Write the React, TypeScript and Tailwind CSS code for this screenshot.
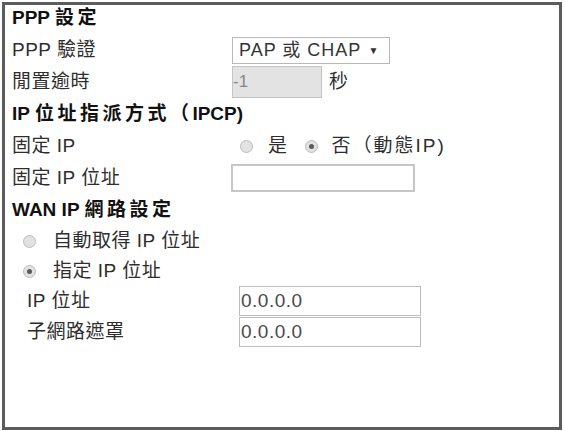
const font = { fontFamily: '"Liberation Sans", "Noto Sans CJK TC", sans-serif' };

function Radio({ checked }: { checked?: boolean }) {
  return (
    <span className="inline-flex h-[13px] w-[13px] shrink-0 items-center justify-center rounded-full border border-[#bcbcbc] bg-[#e2e2e2]">
      {checked && <span className="h-[5px] w-[5px] rounded-full bg-[#5a5a5a]" />}
    </span>
  );
}

function Row({
  label,
  indent,
  h = "h-[32px]",
  children,
}: {
  label: string;
  indent?: boolean;
  h?: string;
  children?: React.ReactNode;
}) {
  return (
    <div className={`flex items-center ${h}`}>
      <div className={indent ? "w-[227px] shrink-0 pl-[15px]" : "w-[220px] shrink-0"}>{label}</div>
      {children}
    </div>
  );
}

function Heading({ latin, cjk, tail }: { latin: string; cjk: string; tail?: string }) {
  return (
    <div className="flex h-[32px] items-center font-bold tracking-normal text-[#111]">
      <span className="whitespace-pre">{latin}</span>
      <span className="tracking-[3.5px]">{cjk}</span>
      {tail && <span>{tail}</span>}
    </div>
  );
}

export default function App() {
  return (
    <div className="h-[431px] w-[565px] bg-white pl-[2px] pt-[2px]">
      <div
        style={font}
        className="h-[428px] w-[560px] border-[3px] border-[#5c5c5c] pl-[7px] text-[19px] tracking-[0.5px] text-[#2e2e2e]"
      >
        <div className="-mt-[3px]">
          <Heading latin="PPP " cjk="設定" />
          <Row label="PPP 驗證">
            <div className="flex h-[27px] w-[158px] items-center border border-[#b8b8b8] bg-white pl-[6px] text-[18px] tracking-[1px] text-[#333]">
              PAP 或 CHAP
              <span className="ml-[7px] text-[10px]">▼</span>
            </div>
          </Row>
          <Row label="閒置逾時">
            <div className="flex h-[32px] w-[90px] items-center border border-[#c4c4c4] bg-[#e3e3e3] text-[17px] tracking-normal text-[#888]">
              -1
            </div>
            <span className="ml-[7px]">秒</span>
          </Row>
          <Heading latin="IP " cjk="位址指派方式（" tail="IPCP)" />
          <Row label="固定 IP">
            <div className="flex items-center pl-[8px]">
              <Radio />
              <span className="ml-[15px] mr-[17px]">是</span>
              <Radio checked />
              <span className="ml-[14px] tracking-[2px]">否（動態IP)</span>
            </div>
          </Row>
          <Row label="固定 IP 位址">
            <div className="-ml-[1px] h-[28px] w-[184px] border-2 border-[#c6c6c6] bg-white" />
          </Row>
          <Heading latin="WAN IP " cjk="網路設定" />
          <div className="flex h-[30px] items-center pl-[11px]">
            <Radio />
            <span className="ml-[17px]">自動取得 IP 位址</span>
          </div>
          <div className="flex h-[30px] items-center pl-[11px]">
            <Radio checked />
            <span className="ml-[17px]">指定 IP 位址</span>
          </div>
          <Row label="IP 位址" indent h="h-[30px]">
            <div className="flex h-[30px] w-[182px] items-center border border-[#bdbdbd] bg-white pl-[1px] text-[19px] tracking-[0.5px] text-[#4a4a4a]">
              0.0.0.0
            </div>
          </Row>
          <Row label="子網路遮罩" indent h="h-[32px]">
            <div className="flex h-[30px] w-[182px] items-center border border-[#bdbdbd] bg-white pl-[1px] text-[19px] tracking-[0.5px] text-[#4a4a4a]">
              0.0.0.0
            </div>
          </Row>
        </div>
      </div>
    </div>
  );
}
